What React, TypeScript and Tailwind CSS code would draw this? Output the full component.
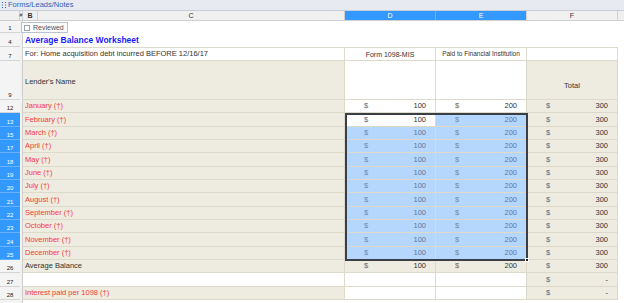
import React from "react";

type Cell = {
  text?: React.ReactNode;
  bg?: "white" | "beige" | "sel";
  money?: [string, string];
  align?: "left" | "center";
  tone?: "red" | "dark" | "blue";
};

const MONTHS = [
  "January",
  "February",
  "March",
  "April",
  "May",
  "June",
  "July",
  "August",
  "September",
  "October",
  "November",
  "December",
];
const MONTH_NUMS = ["12", "13", "15", "17", "18", "19", "20", "21", "22", "23", "24", "25"];

const bgClass = (bg?: Cell["bg"]) =>
  bg === "beige" ? "bg-[#eeebe0]" : bg === "sel" ? "bg-[#b5d6fd]" : "bg-white";

function DataCell({ cell, width }: { cell: Cell; width: string }) {
  const sel = cell.bg === "sel";
  return (
    <div
      className={`${width} ${bgClass(cell.bg)} shrink-0 flex items-center border-r border-b border-[#dedacb] overflow-hidden whitespace-nowrap`}
    >
      {cell.money ? (
        <div
          className={`w-full flex justify-between pl-[19px] pr-[9px] ${
            sel ? "text-[#5f7a99]" : "text-[#333]"
          }`}
        >
          <span className={sel ? "text-[#6d8bae]" : "text-[#666]"}>{cell.money[0]}</span>
          <span>{cell.money[1]}</span>
        </div>
      ) : (
        <div
          className={`w-full ${cell.align === "center" ? "text-center" : "pl-[2px]"} ${
            cell.tone === "red" ? "text-[#f53b3b]" : "text-[#333]"
          }`}
        >
          {cell.text}
        </div>
      )}
    </div>
  );
}

function RowHead({ num, blue }: { num: string; blue?: boolean }) {
  return (
    <div className="flex shrink-0 h-full">
      <div
        className={`w-[20px] h-full flex items-end justify-center pb-[1px] text-[6px] leading-none border-b ${
          blue
            ? "bg-[#3399ff] text-white border-[#66b2ff]"
            : "bg-[#f4f4f4] text-[#222] border-[#d4d4d4]"
        }`}
      >
        {num}
      </div>
      <div className="w-[3px] h-full bg-[#f2f2f2] border-r border-[#cfcfcf]" />
    </div>
  );
}

function Row({
  num,
  h,
  blue,
  label,
  d,
  e,
  f,
}: {
  num: string;
  h: string;
  blue?: boolean;
  label: Cell;
  d: Cell;
  e: Cell;
  f: Cell;
}) {
  return (
    <div className={`flex ${h}`}>
      <RowHead num={num} blue={blue} />
      <div
        className={`w-[322px] shrink-0 ${bgClass(label.bg)} flex items-center pl-[2px] border-r border-b border-[#dedacb] whitespace-nowrap ${
          label.tone === "red" ? "text-[#f53b3b]" : "text-[#333]"
        }`}
      >
        {label.text}
      </div>
      <DataCell cell={d} width="w-[91px]" />
      <DataCell cell={e} width="w-[91px]" />
      <DataCell cell={f} width="w-[91px]" />
      <div className="flex-1 bg-white" />
    </div>
  );
}

export default function App() {
  return (
    <div className="w-[624px] h-[303px] overflow-hidden bg-white text-[7.5px] leading-none font-['Liberation_Sans',Arial,sans-serif]">
      {/* title strip */}
      <div className="h-[11px] bg-[#e7ebf1] border-b border-[#c9ced6] flex items-center pl-[2px] text-[7.5px] text-[#2f62b5]">
        <svg width="4" height="6" viewBox="0 0 4 6" className="mr-[2px]">
          <rect x="0" y="0" width="1" height="1" fill="#2f62b5" />
          <rect x="3" y="0" width="1" height="1" fill="#2f62b5" />
          <rect x="0" y="2.5" width="1" height="1" fill="#2f62b5" />
          <rect x="3" y="2.5" width="1" height="1" fill="#2f62b5" />
          <rect x="0" y="5" width="1" height="1" fill="#2f62b5" />
          <rect x="3" y="5" width="1" height="1" fill="#2f62b5" />
        </svg>
        Forms/Leads/Notes
      </div>

      {/* column headers */}
      <div className="h-[10px] flex bg-[#f0f0f0] border-b border-[#cfcfcf] text-[7px]">
        <div className="w-[20px] shrink-0 border-r border-[#d0d0d0]" />
        <div className="w-[3px] shrink-0 flex items-center justify-center text-[5px] text-[#333] border-r border-[#d0d0d0]">
          #
        </div>
        <div className="w-[15px] shrink-0 flex items-center justify-center font-bold text-[#333] border-r border-[#d0d0d0]">
          B
        </div>
        <div className="w-[307px] shrink-0 flex items-center justify-center text-[#333] border-r border-[#d0d0d0]">
          C
        </div>
        <div className="w-[91px] shrink-0 flex items-center justify-center bg-[#3399ff] text-white border-r border-[#66b2ff]">
          D
        </div>
        <div className="w-[91px] shrink-0 flex items-center justify-center bg-[#3399ff] text-white border-r border-[#d0d0d0]">
          E
        </div>
        <div className="w-[91px] shrink-0 flex items-center justify-center text-[#333] border-r border-[#d0d0d0]">
          F
        </div>
        <div className="flex-1" />
      </div>

      {/* row 1 */}
      <div className="flex h-[12px]">
        <RowHead num="1" />
        <div className="flex-1 bg-white flex items-start">
          <div className="ml-[-2px] mt-[1px] w-[47px] h-[11px] bg-[#fafafa] border border-[#b9c3cf] flex items-center gap-[3px] pl-[2px] text-[#555] text-[7px]">
            <span className="w-[6px] h-[6px] border border-[#9aa4b0] bg-white" />
            Reviewed
          </div>
        </div>
      </div>

      {/* row 4 */}
      <div className="flex h-[14px]">
        <RowHead num="4" />
        <div className="flex-1 bg-white flex items-center pl-[2px] text-[8.5px] font-bold text-[#1a1aff]">
          Average Balance Worksheet
        </div>
      </div>

      {/* row 7 */}
      <div className="flex h-[14px]">
        <RowHead num="7" />
        <div className="w-[322px] shrink-0 bg-white flex items-center pl-[2px] border-r border-b border-t border-[#dedacb] text-[#333]">
          For: Home acquisition debt incurred BEFORE 12/16/17
        </div>
        <div className="w-[91px] shrink-0 bg-white flex items-center justify-center border-r border-b border-t border-[#dedacb] text-[#333] text-[7px]">
          Form 1098-MIS
        </div>
        <div className="w-[91px] shrink-0 bg-white flex items-center justify-center border-r border-b border-t border-[#dedacb] text-[#333] text-[6.5px]">
          Paid to Financial Institution
        </div>
        <div className="w-[91px] shrink-0 bg-white border-r border-b border-t border-[#dedacb]" />
        <div className="flex-1 bg-white" />
      </div>

      {/* row 9 */}
      <div className="flex h-[39px]">
        <RowHead num="9" />
        <div className="w-[322px] shrink-0 bg-[#eeebe0] flex items-center pl-[2px] pt-[4px] border-r border-b border-[#dedacb] text-[#333]">
          Lender's Name
        </div>
        <div className="w-[91px] shrink-0 bg-white border-r border-b border-[#dedacb]" />
        <div className="w-[91px] shrink-0 bg-white border-r border-b border-[#dedacb]" />
        <div className="w-[91px] shrink-0 bg-[#eeebe0] flex items-center justify-center pt-[11px] border-r border-b border-[#dedacb] text-[#333]">
          Total
        </div>
        <div className="flex-1 bg-white" />
      </div>

      {/* month rows with the selection frame */}
      <div className="relative">
        {MONTHS.map((m, i) => {
          const selD = i >= 2 ? "sel" : "white";
          const selE = i >= 1 ? "sel" : "white";
          return (
            <Row
              key={m}
              num={MONTH_NUMS[i]}
              h="h-[13.333px]"
              blue={i >= 1}
              label={{ text: `${m} (†)`, bg: "beige", tone: "red" }}
              d={{ bg: selD as Cell["bg"], money: ["$", "100"] }}
              e={{ bg: selE as Cell["bg"], money: ["$", "200"] }}
              f={{ bg: "beige", money: ["$", "300"] }}
            />
          );
        })}
        <div className="absolute left-[345px] top-[13.333px] w-[183px] h-[147.4px] border-2 border-[#3a3f47] pointer-events-none" />
        <div className="absolute left-[525px] top-[158px] w-[4px] h-[4px] bg-[#222] border border-white" />
      </div>

      <Row
        num="26"
        h="h-[13.333px]"
        label={{ text: "Average Balance", bg: "beige" }}
        d={{ bg: "beige", money: ["$", "100"] }}
        e={{ bg: "beige", money: ["$", "200"] }}
        f={{ bg: "beige", money: ["$", "300"] }}
      />
      <Row
        num="27"
        h="h-[13.333px]"
        label={{ text: "", bg: "white" }}
        d={{ bg: "white" }}
        e={{ bg: "white" }}
        f={{ bg: "beige", money: ["$", "-"] }}
      />
      <Row
        num="28"
        h="h-[13.333px]"
        label={{ text: "Interest paid per 1098 (†)", bg: "beige", tone: "red" }}
        d={{ bg: "white" }}
        e={{ bg: "white" }}
        f={{ bg: "beige", money: ["$", "-"] }}
      />
      <div className="flex h-[10px]">
        <RowHead num="" />
        <div className="flex-1 bg-white" />
      </div>
    </div>
  );
}
